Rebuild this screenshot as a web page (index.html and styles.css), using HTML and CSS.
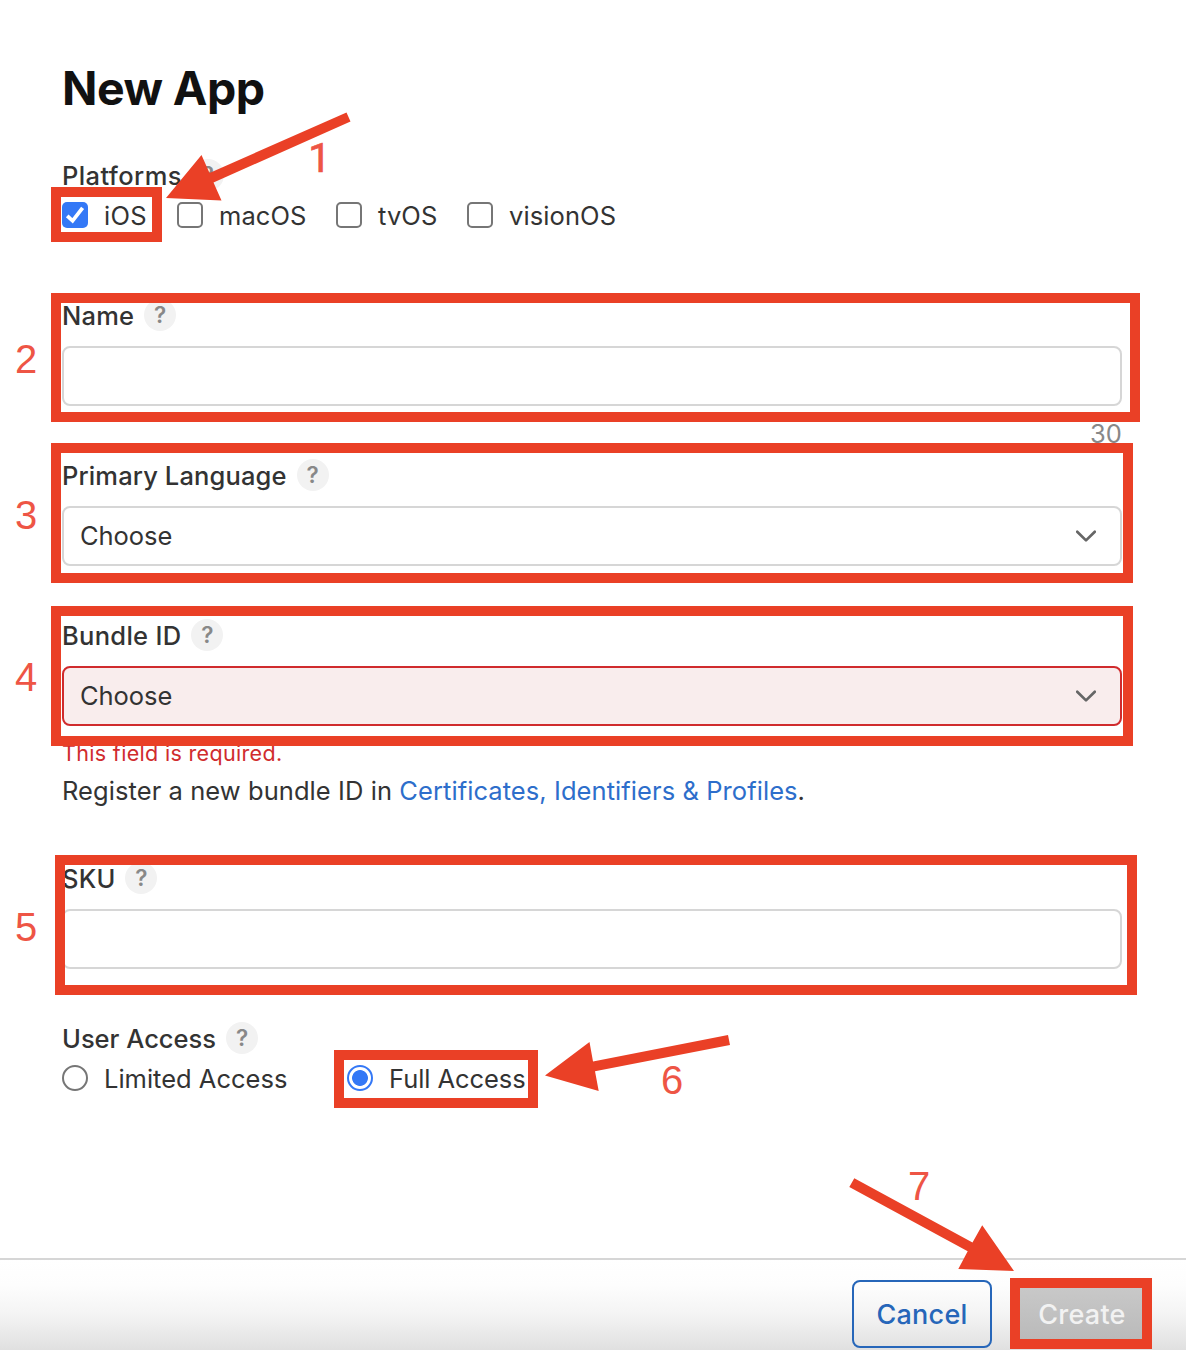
FILE: index.html
```html
<!DOCTYPE html>
<html lang="en">
<head>
<meta charset="utf-8">
<title>New App</title>
<link rel="stylesheet" href="styles.css">
</head>
<body>
<div class="dialog">
  <main class="form">
    <h1 class="title">New App</h1>

    <div class="label platforms-label"><span>Platforms</span><span class="help">?</span></div>
    <div class="options">
      <label class="option ios"><span class="checkbox checked"><svg viewBox="0 0 26 26" width="26" height="26"><path d="M5.200 13.800 10.600 18.800 20.600 5.800" fill="none" stroke="#fff" stroke-width="3.8"/></svg></span><span>iOS</span></label>
      <label class="option macos"><span class="checkbox"></span><span>macOS</span></label>
      <label class="option tvos"><span class="checkbox"></span><span>tvOS</span></label>
      <label class="option visionos"><span class="checkbox"></span><span>visionOS</span></label>
    </div>

    <div class="label name-label"><span>Name</span><span class="help">?</span></div>
    <div class="field"></div>
    <div class="counter">30</div>

    <div class="label language-label"><span>Primary Language</span><span class="help">?</span></div>
    <div class="field"><span class="value">Choose</span><svg class="chevron" viewBox="0 0 20 12" width="20" height="12"><path d="M1.200 1.700 10 10.400 18.800 1.700"/></svg></div>

    <div class="label bundle-label"><span>Bundle ID</span><span class="help">?</span></div>
    <div class="field invalid"><span class="value">Choose</span><svg class="chevron" viewBox="0 0 20 12" width="20" height="12"><path d="M1.200 1.700 10 10.400 18.800 1.700"/></svg></div>
    <div class="error">This field is required.</div>
    <div class="hint">Register a new bundle ID in <a class="link">Certificates, Identifiers &amp; Profiles</a>.</div>

    <div class="label sku-label"><span>SKU</span><span class="help">?</span></div>
    <div class="field"></div>

    <div class="label access-label"><span>User Access</span><span class="help">?</span></div>
    <div class="options">
      <label class="option limited"><span class="radio"></span><span>Limited Access</span></label>
      <label class="option full"><span class="radio selected"></span><span>Full Access</span></label>
    </div>
  </main>
  <footer class="footer">
    <div class="button cancel">Cancel</div>
    <div class="button create">Create</div>
  </footer>

  <svg class="annotations" viewBox="0 0 1186 1350" width="1186" height="1350">
    <g class="frames">
      <rect x="56" y="192" width="101" height="45"/>
      <rect x="56" y="298" width="1079" height="119"/>
      <rect x="56" y="448" width="1072" height="130"/>
      <rect x="56" y="611" width="1072" height="130"/>
      <rect x="60" y="860" width="1072" height="130"/>
      <rect x="339" y="1055" width="194" height="48"/>
      <rect x="1015" y="1283" width="132" height="61"/>
    </g>
    <g class="arrows">
      <path d="M166 198 201.500 155 209.500 173 346.500 112.500 350.500 121.500 213.500 182.500 221.500 200.500Z"/>
      <path d="M545 1075.500 589.500 1042 593 1061.500 728 1035 730 1045 595 1071.300 598.700 1091Z"/>
      <path d="M1014 1271 958.300 1269 967.700 1251.300 849.300 1187 854.300 1178.300 972.500 1242.500 982.200 1225.300Z"/>
    </g>
    <g class="steps">
      <text class="step-one" x="308.200" y="172">1</text>
      <text x="15" y="372.500">2</text>
      <text x="15" y="528.500">3</text>
      <text x="15" y="691">4</text>
      <text x="15" y="940.500">5</text>
      <text x="661" y="1094">6</text>
      <text x="908" y="1200">7</text>
    </g>
  </svg>
</div>
</body>
</html>
```

FILE: styles.css
```css
* { box-sizing: border-box; }
body {
  margin: 0;
  background: #fff;
  color: #333;
  font-family: Inter, "Liberation Sans", sans-serif;
  font-size: 25.5px;
  letter-spacing: 0.1px;
}
.dialog {
  position: relative;
  width: 1186px;
  height: 1350px;
  display: flex;
  flex-direction: column;
  overflow: hidden;
}
.form {
  height: 1258px;
  padding: 59px 64px 0 62px;
}
.title {
  margin: 0;
  height: 58px;
  line-height: 58px;
  font-size: 46.5px;
  font-weight: 700;
  letter-spacing: -0.55px;
  color: #111;
}
.label {
  display: flex;
  align-items: center;
  gap: 10px;
  height: 32px;
  font-weight: 500;
  letter-spacing: 0.2px;
  white-space: nowrap;
}
.platforms-label { margin-top: 42px; letter-spacing: 0.4px; }
.name-label { margin-top: 60px; margin-bottom: 15px; }
.language-label { margin-bottom: 15px; letter-spacing: 0.13px; }
.bundle-label { margin-top: 53px; margin-bottom: 15px; letter-spacing: 0.3px; }
.sku-label { margin-top: 54px; margin-bottom: 15px; }
.access-label { margin-top: 53px; letter-spacing: 0; }
.help {
  width: 32px;
  height: 32px;
  border-radius: 50%;
  background: #f2f2f2;
  color: #888;
  font-size: 22.5px;
  font-weight: 600;
  line-height: 32px;
  letter-spacing: 0;
  text-align: center;
}
.options {
  display: flex;
  height: 48px;
  align-items: center;
}
.option {
  display: flex;
  align-items: center;
  gap: 16px;
  white-space: nowrap;
}
.ios { width: 115px; letter-spacing: 0.3px; }
.macos { width: 159px; }
.tvos { width: 131px; }
.limited { width: 285px; letter-spacing: 0; }
.full { letter-spacing: -0.06px; }
.checkbox, .radio {
  flex: none;
  width: 26px;
  height: 26px;
  border: 2px solid #767676;
  border-radius: 5px;
}
.checkbox.checked { border: 0; background: #3478f6; }
.checkbox svg { display: block; }
.radio { border-radius: 50%; }
.radio.selected {
  border-color: #3478f6;
  background: radial-gradient(circle, #3478f6 7.5px, #fff 8.3px);
}
.field {
  display: flex;
  align-items: center;
  justify-content: space-between;
  height: 60px;
  padding: 0 24px 0 16px;
  border: 2px solid #d6d6d6;
  border-radius: 8px;
}
.field.invalid { border-color: #d02b2d; background: #f9eded; }
.value { padding-bottom: 2px; letter-spacing: -0.05px; }
.chevron path {
  fill: none;
  stroke: #666;
  stroke-width: 2.7;
  stroke-linecap: round;
  stroke-linejoin: round;
}
.counter {
  height: 53px;
  line-height: 56px;
  text-align: right;
  color: #888;
}
.error {
  height: 46px;
  line-height: 54px;
  font-size: 21.5px;
  letter-spacing: 0.33px;
  color: #d02b2d;
}
.hint { height: 36px; line-height: 38px; letter-spacing: 0.07px; white-space: nowrap; }
.link { color: #2d6ecb; }
.footer {
  display: flex;
  gap: 18px;
  height: 92px;
  padding: 20px 34px 0 852px;
  border-top: 2px solid #d6d6d6;
  background: linear-gradient(#fff 0, #fdfdfd 28%, #f4f4f4 60%, #e0e0e0 100%);
}
.button {
  flex: none;
  height: 68px;
  line-height: 66px;
  border: 2px solid #2666b9;
  border-radius: 8px;
  text-align: center;
  font-size: 27px;
  font-weight: 500;
  letter-spacing: 0.25px;
}
.cancel { width: 140px; color: #2666b9; }
.create { width: 142px; padding-left: 2px; color: #f2f2f2; border-color: #c4c4c4; background: linear-gradient(#cacaca, #b8b8b8); }
.annotations { position: absolute; left: 0; top: 0; }
.frames rect { fill: none; stroke: #ea4026; stroke-width: 10; }
.arrows path { fill: #ea4026; }
.steps {
  fill: #ee5545;
  font-family: "Liberation Sans", sans-serif;
  font-size: 40px;
  letter-spacing: 0;
}
.step-one { font-family: Roboto, sans-serif; stroke: #ee5545; stroke-width: 0.7px; }
```
